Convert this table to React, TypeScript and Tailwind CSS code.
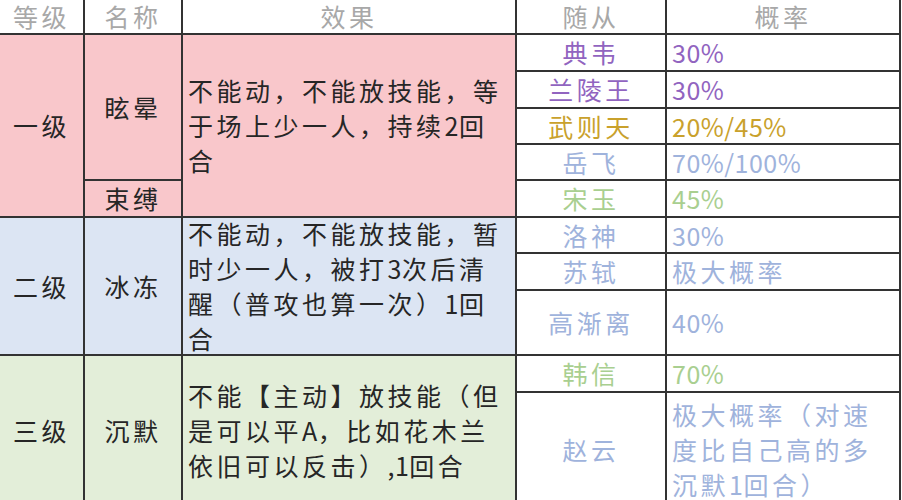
import React from "react";

const FONT = { fontFamily: '"Noto Sans CJK SC", "Noto Sans", sans-serif' };

type Follower = { name: string; rate: string[]; color: string; row: string };

const FOLLOWERS: Follower[] = [
  { name: "典韦", rate: ["30%"], color: "text-[#9164c0]", row: "row-start-2" },
  { name: "兰陵王", rate: ["30%"], color: "text-[#9164c0]", row: "row-start-3" },
  { name: "武则天", rate: ["20%/45%"], color: "text-[#c9a12c]", row: "row-start-4" },
  { name: "岳飞", rate: ["70%/100%"], color: "text-[#9fb3dc]", row: "row-start-5" },
  { name: "宋玉", rate: ["45%"], color: "text-[#a9cf90]", row: "row-start-6" },
  { name: "洛神", rate: ["30%"], color: "text-[#9fb3dc]", row: "row-start-7" },
  { name: "苏轼", rate: ["极大概率"], color: "text-[#9fb3dc]", row: "row-start-8" },
  { name: "高渐离", rate: ["40%"], color: "text-[#9fb3dc]", row: "row-start-9" },
  { name: "韩信", rate: ["70%"], color: "text-[#a9cf90]", row: "row-start-10" },
  {
    name: "赵云",
    rate: ["极大概率（对速", "度比自己高的多", "沉默1回合）"],
    color: "text-[#9fb3dc]",
    row: "row-start-11",
  },
];

// CJK glyphs in the shot are spread wider than latin ones, so only CJK runs get tracking
function Txt({ s }: { s: string }) {
  const parts = s.match(/[\x20-\x7e]+|[^\x20-\x7e]+/g) ?? [];
  return (
    <>
      {parts.map((p, i) =>
        /^[\x20-\x7e]+$/.test(p) ? (
          <span key={i} className="tracking-[0.5px]">
            {p}
          </span>
        ) : (
          <span key={i} className="tracking-[3.5px]">
            {p}
          </span>
        )
      )}
    </>
  );
}

function Lines({ lines }: { lines: string[] }) {
  return (
    <div>
      {lines.map((l, i) => (
        <div key={i} className="whitespace-nowrap">
          <Txt s={l} />
        </div>
      ))}
    </div>
  );
}

export default function App() {
  const head = "flex items-center justify-center bg-white text-[#a8a8a8] leading-none tracking-[3.5px]";
  const center = "flex items-center justify-center tracking-[3.5px]";
  const effect = "flex items-center overflow-hidden pl-[5px]";

  return (
    <div className="h-[500px] w-[902px] overflow-hidden bg-white" style={FONT}>
      <div
        className="grid w-[901px] gap-[2px] bg-[#333333] pr-[2px] text-[25px] leading-[35px] text-[#262626]"
        style={{
          gridTemplateColumns: "83px 96px 332px 148px 232px",
          gridTemplateRows: "33px 35px 35px 34px 34px 35px 34px 35px 63px 35px 112px",
        }}
      >
        <div className={`${head} col-start-1 row-start-1`}>等级</div>
        <div className={`${head} col-start-2 row-start-1`}>名称</div>
        <div className={`${head} col-start-3 row-start-1`}>效果</div>
        <div className={`${head} col-start-4 row-start-1`}>随从</div>
        <div className={`${head} col-start-5 row-start-1`}>概率</div>

        {/* 一级 */}
        <div className={`${center} col-start-1 row-start-2 row-span-5 bg-[#f9c7cb]`}>一级</div>
        <div className={`${center} col-start-2 row-start-2 row-span-4 bg-[#f9c7cb]`}>眩晕</div>
        <div className={`${center} col-start-2 row-start-6 bg-[#f9c7cb]`}>束缚</div>
        <div className={`${effect} col-start-3 row-start-2 row-span-5 bg-[#f9c7cb]`}>
          <Lines lines={["不能动，不能放技能，等", "于场上少一人，持续2回", "合"]} />
        </div>

        {/* 二级 */}
        <div className={`${center} col-start-1 row-start-7 row-span-3 bg-[#dce5f3]`}>二级</div>
        <div className={`${center} col-start-2 row-start-7 row-span-3 bg-[#dce5f3]`}>冰冻</div>
        <div className={`${effect} col-start-3 row-start-7 row-span-3 bg-[#dce5f3]`}>
          <Lines lines={["不能动，不能放技能，暂", "时少一人，被打3次后清", "醒（普攻也算一次）1回", "合"]} />
        </div>

        {/* 三级 */}
        <div className={`${center} col-start-1 row-start-10 row-span-2 bg-[#e3eed9]`}>三级</div>
        <div className={`${center} col-start-2 row-start-10 row-span-2 bg-[#e3eed9]`}>沉默</div>
        <div className={`${effect} col-start-3 row-start-10 row-span-2 bg-[#e3eed9]`}>
          <Lines lines={["不能【主动】放技能（但", "是可以平A，比如花木兰", "依旧可以反击）,1回合"]} />
        </div>

        {FOLLOWERS.map((f) => (
          <React.Fragment key={f.name}>
            <div className={`${center} col-start-4 ${f.row} bg-white ${f.color}`}>{f.name}</div>
            <div className={`flex items-center pl-[5px] col-start-5 ${f.row} bg-white ${f.color}`}>
              <Lines lines={f.rate} />
            </div>
          </React.Fragment>
        ))}
      </div>
    </div>
  );
}
